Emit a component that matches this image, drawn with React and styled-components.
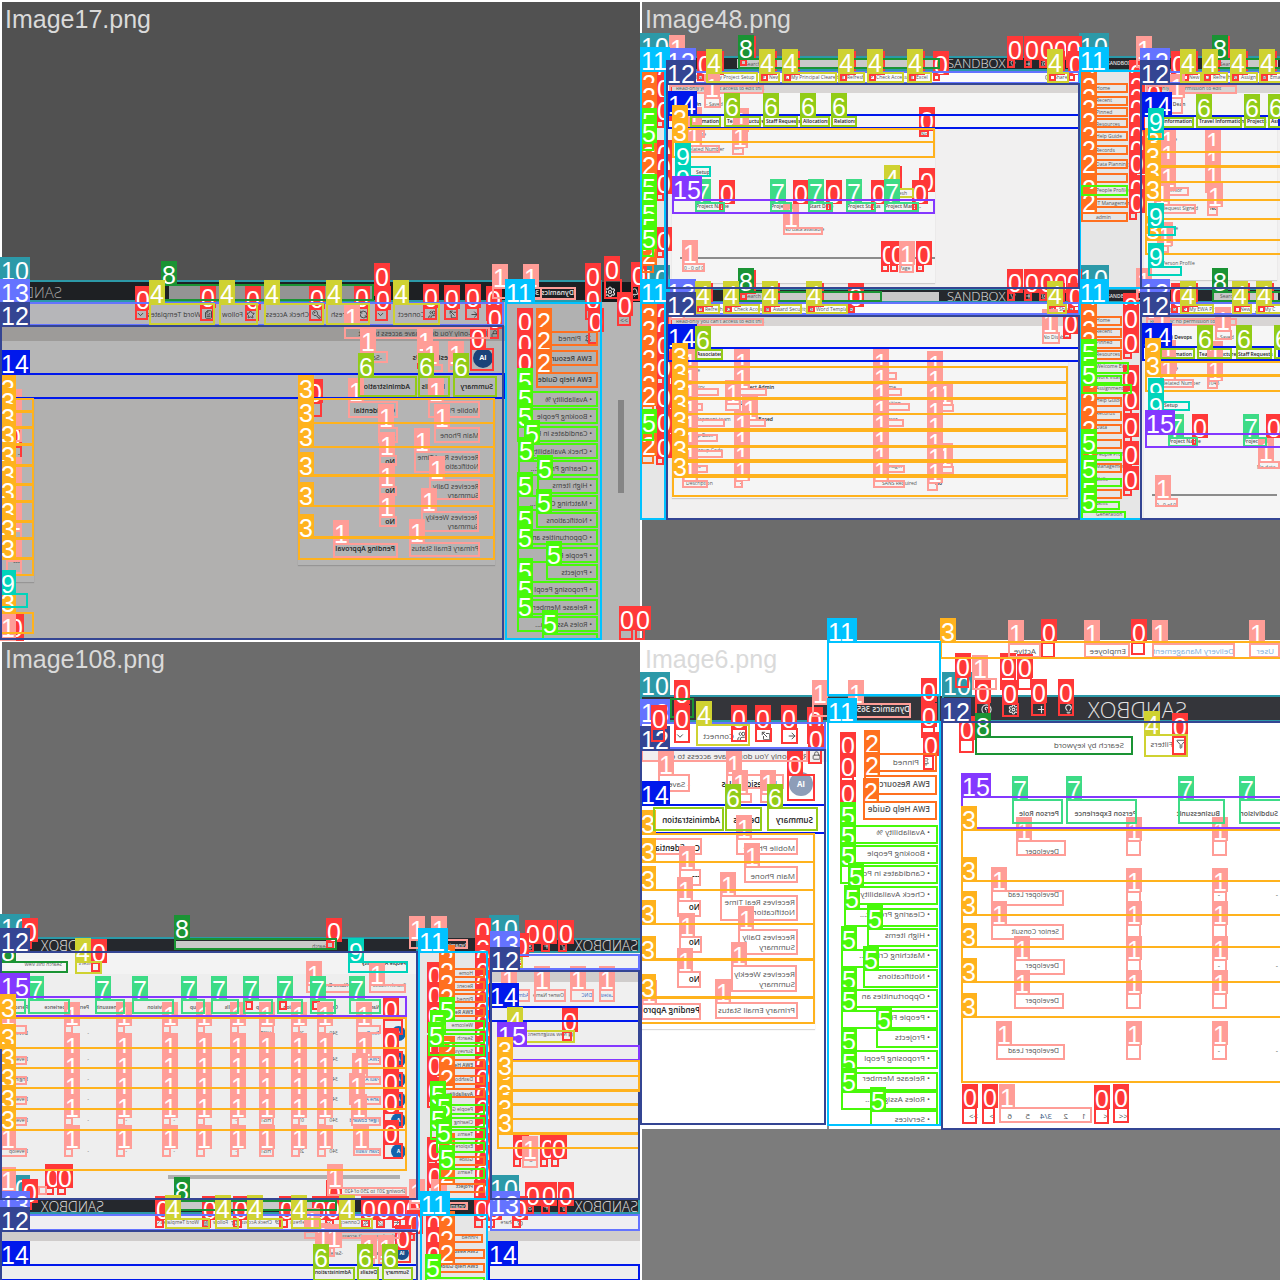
import React from "react";
import styled, { createGlobalStyle, css } from "styled-components";
import {
  ArrowLeft, ExternalLink, Users, ChevronDown, RefreshCw, KeyRound, Star, FileText,
  Plus, Settings, HelpCircle, Bell, Lock, Pin, Filter, Save, Lightbulb,
} from "lucide-react";

const Global = createGlobalStyle`
  *, *::before, *::after { box-sizing: border-box; }
  body { margin: 0; background: #fff; font-family: "Liberation Sans", Arial, sans-serif; }
  button, input { font: inherit; color: inherit; }
`;

/* ---------- class colours used by the boxes ---------- */
const COLORS = [
  "#ff3838", "#ff9d97", "#ff701f", "#ffb21d", "#cfd231", "#48f90a", "#92cc17", "#3ddb86",
  "#1a9334", "#00d4bb", "#2c99a8", "#00c2ff", "#344593", "#6473ff", "#0018ec", "#8438ff",
];

/* ---------- page structure ---------- */
const Page = styled.main`
  position: relative;
  display: grid;
  grid-template-columns: 1fr 1fr;
  grid-auto-rows: 640px;
  overflow: hidden;
`;
const TileBox = styled.figure`
  margin: 0;
  min-width: 0;
  display: flex;
  flex-direction: column;
  border-top: 2px solid #fff;
  border-left: 2px solid #fff;
  background: ${(p) => p.$bg};
  overflow: hidden;
`;
const Caption = styled.figcaption`
  height: ${(p) => p.$h}px;
  flex: none;
  padding: 3px;
  font-size: 25px;
  line-height: 28px;
  color: #dadada;
`;
const WindowRow = styled.div`
  display: flex;
  height: ${(p) => p.$h}px;
  flex: none;
`;
const WindowBox = styled.section`
  display: flex;
  flex-direction: column;
  min-width: 0;
  overflow: hidden;
  font-family: "Open Sans", "Noto Sans", sans-serif;
  flex: ${(p) => (p.$w ? `0 0 ${p.$w}px` : "1 1 0")};
  font-size: ${(p) => p.$fs}px;
  line-height: ${(p) => p.$fs + 2}px;
  color: ${(p) => p.$ink};
  background: ${(p) => p.$bg};
  transform: ${(p) => (p.$mirror ? "scaleX(-1)" : "none")};
`;
const TopBar = styled.header`
  display: flex;
  align-items: center;
  flex: none;
  height: ${(p) => p.$h}px;
  background: ${(p) => p.$bg};
  color: #e4e4e4;
  font-weight: 600;
  white-space: nowrap;
`;
const BarText = styled.span`
  flex: 0 0 ${(p) => p.$w}px;
`;
const Brand = styled.span`
  flex: 0 0 ${(p) => p.$w}px;
  font-size: ${(p) => p.$fs}px;
  line-height: ${(p) => p.$fs}px;
  font-weight: 300;
  color: ${(p) => (p.$dim ? "#a9a9a9" : "inherit")};
`;
const Space = styled.span`
  flex: 0 0 ${(p) => p.$w}px;
`;
const SearchField = styled.input`
  flex: 0 0 ${(p) => p.$w}px;
  min-width: 0;
  height: ${(p) => p.$h}px;
  border: 0;
  border-radius: 0;
  padding: 0 8px;
  background: ${(p) => p.$bg};
  color: #555;
  font-weight: 400;
`;
const Body = styled.div`
  display: flex;
  flex: 1;
  min-height: 0;
`;
const Nav = styled.nav`
  flex: ${(p) => (p.$w ? `0 0 ${p.$w}px` : "1 1 0")};
  background: ${(p) => p.$bg};
  padding-top: ${(p) => p.$top}px;
  overflow: hidden;
  border-right: ${(p) => (p.$scroll ? "2px solid #8c8c8c" : "0")};
`;
const NavLink = styled.a`
  display: flex;
  align-items: center;
  height: ${(p) => p.$h}px;
  padding-left: ${(p) => p.$pad}px;
  gap: 3px;
  white-space: nowrap;
  text-decoration: none;
  color: inherit;
  font-weight: ${(p) => (p.$bold ? 600 : 400)};
`;
const Main = styled.div`
  flex: 1;
  min-width: 0;
  display: flex;
  flex-direction: column;
  overflow: hidden;
`;
const Band = styled.div`
  display: flex;
  align-items: center;
  flex: none;
  height: ${(p) => p.$h}px;
  background: ${(p) => p.$bg || "transparent"};
  white-space: nowrap;
`;
const plainButton = css`
  display: flex;
  align-items: center;
  gap: 3px;
  min-width: 0;
  padding: 0;
  border: 0;
  background: none;
  white-space: nowrap;
`;
const Command = styled.button`
  ${plainButton}
  flex: 0 0 ${(p) => p.$w}px;
  margin-left: ${(p) => p.$gap}px;
`;
const Tab = styled.button`
  ${plainButton}
  flex: 0 0 ${(p) => p.$w}px;
  margin-left: ${(p) => p.$gap}px;
  color: #222;
  font-weight: 600;
`;
const Piece = styled.span`
  flex: 0 0 ${(p) => p.$w}px;
  margin-left: ${(p) => p.$gap}px;
  font-weight: ${(p) => (p.$bold ? 600 : 400)};
  color: ${(p) => p.$c || "inherit"};
`;
const Avatar = styled.span`
  display: grid;
  place-items: center;
  flex: none;
  width: ${(p) => p.$s}px;
  height: ${(p) => p.$s}px;
  margin-left: ${(p) => p.$gap || 0}px;
  border-radius: 50%;
  background: ${(p) => p.$bg};
  color: #fff;
  font-weight: 700;
`;
const Cards = styled.div`
  display: flex;
  align-items: flex-start;
  flex: 1;
  padding-left: ${(p) => p.$pad}px;
  gap: ${(p) => p.$gap || 0}px;
`;
const Card = styled.div`
  margin: 0;
  flex: 0 0 ${(p) => p.$w}px;
  padding-bottom: 6px;
  background: ${(p) => p.$bg};
  box-shadow: 0 1px 1px rgba(0, 0, 0, 0.15);
`;
const FieldRow = styled.div`
  display: grid;
  align-items: center;
  grid-template-columns: ${(p) => p.$cols};
  height: ${(p) => p.$h}px;
  padding-left: ${(p) => p.$pad}px;
  dt, dd { margin: 0; white-space: pre; }
  dd { font-weight: 600; color: #222; }
`;
const Grid = styled.table`
  border-collapse: collapse;
  table-layout: fixed;
  width: ${(p) => p.$w}px;
  margin-left: ${(p) => p.$ml || 0}px;
  flex: none;
  font-size: ${(p) => p.$fs || 5}px;
  th, td { padding: 0; text-align: left; vertical-align: middle; white-space: nowrap; }
  th { font-weight: 600; }
  a { color: #1a5fa8; text-decoration: none; }
`;
const Tr = styled.tr`
  height: ${(p) => p.$h}px;
`;
const Rule = styled.hr`
  border: 0;
  flex: none;
  width: ${(p) => p.$w}px;
  height: ${(p) => p.$h}px;
  margin: 0 0 0 ${(p) => p.$ml}px;
  background: ${(p) => p.$c};
`;
const ScrollRail = styled.div`
  width: ${(p) => p.$w}px;
  height: ${(p) => p.$h}px;
  margin: ${(p) => p.$mt}px 0 0 ${(p) => p.$ml}px;
  background: #858585;
`;

/* ---------- boxes drawn over the windows ---------- */
const Layer = styled.div`
  position: absolute;
  inset: 0;
  pointer-events: none;
`;
const MarkBox = styled.div.attrs((p) => ({
  style: { left: p.$r[0], top: p.$r[1], width: p.$r[2], height: p.$r[3] },
}))`
  position: absolute;
  border: 2px solid ${(p) => p.$c};
`;
const MarkTag = styled.span`
  position: absolute;
  left: -2px;
  bottom: calc(100% + 1px);
  width: ${(p) => (p.$wide ? 30 : 16)}px;
  height: 24px;
  padding-left: 1px;
  background: ${(p) => p.$c};
  color: #fff;
  font-size: 25px;
  line-height: 28px;
`;

/* ---------- small building functions ---------- */
const ICONS = {
  back: ArrowLeft, open: ExternalLink, users: Users, down: ChevronDown, refresh: RefreshCw,
  key: KeyRound, star: Star, doc: FileText, plus: Plus, gear: Settings, help: HelpCircle,
  bell: Bell, lock: Lock, pin: Pin, filter: Filter, save: Save, bulb: Lightbulb,
};
const IconBox = styled.span`
  display: flex;
  flex: none;
`;
const Icon = ({ n, s = 8 }) => {
  const C = ICONS[n];
  return C ? <IconBox><C size={s} strokeWidth={2.4} aria-hidden="true" /></IconBox> : null;
};

const Tile = ({ title, bg, pad, children }) => (
  <TileBox $bg={bg}>
    {title && <Caption $h={pad}>{title}</Caption>}
    {children}
  </TileBox>
);

const Win = ({ w, mirror, fs = 5, ink = "#555", bg = "#f1f0f0", barH, barBg = "#25282d", bar, nav, children }) => (
  <WindowBox $w={w} $mirror={mirror} $fs={fs} $ink={ink} $bg={bg}>
    <TopBar $h={barH} $bg={barBg}>{bar}</TopBar>
    <Body>
      {nav}
      {children && <Main>{children}</Main>}
    </Body>
  </WindowBox>
);

const Side = ({ w, bg, top, pad, items, scroll }) => (
  <Nav $w={w} $bg={bg} $top={top} $scroll={scroll}>
    {items.map(([t, h, bold, icon], i) => (
      <NavLink key={i} href="#item" $h={h} $pad={pad} $bold={bold}>
        {icon && <Icon n={icon} />}
        {t}
      </NavLink>
    ))}
  </Nav>
);

const Commands = ({ h, bg, items, s }) => (
  <Band $h={h} $bg={bg}>
    {items.map(([gap, w, icon, t], i) => (
      <Command key={i} type="button" $gap={gap} $w={w} aria-label={t || icon}>
        <Icon n={icon} s={s} />
        {t}
      </Command>
    ))}
  </Band>
);

const Tabs = ({ h, bg, items }) => (
  <Band $h={h} $bg={bg}>
    {items.map(([gap, w, t], i) => (
      <Tab key={i} type="button" $gap={gap} $w={w}>{t}</Tab>
    ))}
  </Band>
);

const Texts = ({ h, bg, items = [], children }) => (
  <Band $h={h} $bg={bg}>
    {children}
    {items.map(([gap, w, t, bold, c], i) => (
      <Piece key={i} $gap={gap} $w={w} $bold={bold} $c={c}>{t}</Piece>
    ))}
  </Band>
);

const Form = ({ w, bg, pad, cols, rows }) => (
  <Card as="dl" $w={w} $bg={bg}>
    {rows.map(([h, ...cells], i) => (
      <FieldRow key={i} $h={h} $pad={pad} $cols={cols}>
        {cells.map((t, j) => (j % 2 ? <dd key={j}>{t}</dd> : <dt key={j}>{t}</dt>))}
      </FieldRow>
    ))}
  </Card>
);

const DataTable = ({ w, ml, fs, cols, headH, head, rows }) => (
  <Grid $w={w} $ml={ml} $fs={fs}>
    <colgroup>{cols.map((c, i) => <col key={i} width={c} />)}</colgroup>
    <thead><Tr $h={headH}>{head.map((t, i) => <th key={i}>{t}</th>)}</Tr></thead>
    <tbody>
      {rows.map(([h, ...cells], i) => (
        <Tr key={i} $h={h}>{cells.map((t, j) => <td key={j}>{t}</td>)}</Tr>
      ))}
    </tbody>
  </Grid>
);

/* ---------- Image17 ---------- */
const GROUPS = [
  "Availability %", "Booking People", "Candidates in Po", "Check Availability", "Clearing Project...",
  "High Items", "Matching Criteri...", "Notifications", "Opportunities an", "People Files", "Projects",
  "Proposing Peopl", "Release Member", "Roles Assignm...", "Services",
];
const CONTACT = [
  ["Mobile Phone", "Confidential"], ["Main Phone", "---"], ["Receives Real Time\nNotifications", "No"],
  ["Receives Daily\nSummary", "No"], ["Receives Weekly\nSummary", "No"], ["Primary Email Status", "Pending Approval"],
];
const withHeights = (rows, hs) => rows.map((r, i) => [hs[i], ...r]);

const Image17 = () => (
  <Tile title="Image17.png" bg="#515151" pad={280}>
    <WindowRow $h={358}>
      <Win w={599} mirror fs={7} ink="#3c3c3c" bg="#b1b0af" barH={20} barBg="#1e2023"
        bar={<>
          <BarText $w={27} /><BarText $w={74}>Dynamics 365</BarText><Space $w={127} />
          <SearchField $w={204} $h={14} $bg="#949494" aria-label="Search" />
          <Space $w={107} /><Brand $w={60} $fs={15} $dim>SANDBOX</Brand>
        </>}
        nav={<Side w={96} bg="#b1b1b1" top={27} pad={9} scroll items={[
          ["Pinned", 19, 0, "pin"], ["EWA Resources", 21, 1], ["EWA Help Guide", 21, 1],
          ...GROUPS.map((t, i) => ["•   " + t, i % 3 ? 17 : 18, 0]),
        ]} />}>
        <Commands h={24} bg="#b6b6b9" s={9} items={[
          [26, 14, "back"], [7, 14, "open"], [7, 44, "users", "Connect"], [8, 10, "down"],
          [7, 44, "refresh", "Refresh"], [3, 58, "key", "Check Access"], [8, 38, "star", "Follow"],
          [4, 64, "doc", "Word Templates"], [4, 12, "down"],
        ]} />
        <Texts h={15} bg="#9d9b99" items={[[4, 150, "Read-only You don't have access to edit"]]}><Space $w={6} /><Icon n="lock" /></Texts>
        <Texts h={33} bg="#b6b6b6" items={[[12, 56, "IA Resident Us", 1, "#1c1c1c"], [23, 40, "-Saved"]]}>
          <Avatar $s={20} $gap={12} $bg="#1b4379">IA</Avatar>
        </Texts>
        <Tabs h={24} bg="#b6b6b6" items={[[12, 38, "Summary"], [10, 25, "Details"], [10, 55, "Administration"]]} />
        <Cards $pad={10} $gap={264}>
          <Form w={197} bg="#b4b4b4" pad={16} cols="84px 1fr" rows={withHeights(CONTACT, [25, 25, 27, 31, 31, 22])} />
          <Form w={32} bg="#b4b4b4" pad={14} cols="1fr" rows={[[37, "-"], [37, "-"], [37, "-"], [37, "-"], [30, "---"]]} />
        </Cards>
      </Win>
      <Win mirror fs={7} bg="#b5b5b5" barH={20} barBg="#17191c"
        bar={<><Space $w={1} /><Icon n="bell" s={9} /><Space $w={14} /><Icon n="gear" s={12} /></>}>
        <Texts h={36} bg="#b5b5b5" items={[[12, 20, ">>"]]} />
        <ScrollRail $w={6} $h={93} $mt={62} $ml={16} />
      </Win>
    </WindowRow>
  </Tile>
);

/* ---------- Image48 ---------- */
const darkBar48 = (
  <>
    <Space $w={95} /><SearchField $w={202} $h={9} $bg="#c9c9c9" defaultValue="Search" aria-label="Search" />
    <Space $w={8} /><Brand $w={62} $fs={13}>SANDBOX</Brand>
    <Icon n="bulb" /><Space $w={8} /><Icon n="plus" /><Space $w={8} /><Icon n="gear" />
  </>
);
const sideBar48 = <><Space $w={28} /><BarText $w={30}>SANDBOX</BarText><Space $w={75} /><SearchField $w={66} $h={9} $bg="#c9c9c9" defaultValue="Search" aria-label="Search" /></>;
const PROJECT_COLS = ["Project Name", "Project", "Start Date", "Project Status", "Project Mana..."];

const Image48 = () => (
  <Tile title="Image48.png" bg="#6c6c6c" pad={54}>
    <WindowRow $h={233}>
      <Win w={437} barH={15} bar={darkBar48} nav={<Side w={24} bg="#e6e6e6" top={20} pad={2} items={[]} />}>
        <Commands h={12} bg="#fbfbfb" s={6} items={[[30, 8, "save"], [2, 51, "open", "My Project Setup"], [3, 20, "plus", "New"], [2, 54, "users", "My Principal Cleared"], [2, 26, "doc", "Refresh"], [3, 36, "key", "Check Access"], [4, 24, "doc", "Excel"], [114, 22, "open", "Share"]]} />
        <Texts h={10} bg="#d8d5d4" items={[[10, 100, "Read-only you can't access to edit this"]]} />
        <Texts h={22} bg="#f6f6f6" items={[[28, 10, "On", 1, "#111"], [2, 20, "- Saved"]]} />
        <Tabs h={13} bg="#f6f6f6" items={[[24, 33, "Information"], [4, 35, "Team Structure"], [4, 33, "Staff Requests"], [4, 28, "Allocations"], [3, 26, "Relations"]]} />
        <Cards $pad={6}>
          <Card $w={263} $bg="#f5f5f5">
            <Texts h={13} items={[[20, 22, "Name"], [207, 10, "No"]]} />
            <Texts h={16} items={[[14, 40, "Related Number"], [8, 20, "---"]]} />
            <Texts h={30} items={[[24, 30, "Setup", 1]]} />
            <Texts h={13} items={[[213, 28, "+ Refresh"]]} />
            <DataTable w={239} ml={24} cols={[75, 38, 38, 38, 50]} headH={13} head={PROJECT_COLS} rows={[]} />
            <Texts h={32} items={[[112, 60, "No data available"]]} />
            <Texts h={12} />
            <Rule $w={255} $h={2} $ml={8} $c="#8c8c8c" />
            <Texts h={18} items={[[12, 25, "0 - 0 of 0"], [172, 8, "<"], [10, 18, "Page 1"], [1, 8, ">"]]} />
          </Card>
        </Cards>
      </Win>
      <Win barH={15} bar={sideBar48} nav={<Side w={61} bg="#e6e6e6" top={11} pad={17} items={[["Home", 12], ["Recent", 12], ["Pinned", 12], ["Resources", 12], ["Help Guide", 13], ["Records", 14], ["Data Planning", 14], ["", 13], ["People Profiles", 13], ["IT Management", 13], ["admin", 14]]} />}>
        <Commands h={12} bg="#fbfbfb" s={6} items={[[30, 8, "save"], [2, 22, "plus", "New"], [2, 26, "refresh", "Refresh"], [2, 28, "users", "Assign"], [1, 18, "doc", "Email"]]} />
        <Texts h={10} bg="#d8d5d4" items={[[6, 80, "Read-only: no permission to edit"]]} />
        <Texts h={22} bg="#f6f6f6" items={[[24, 28, "Jan Dean", 1]]} />
        <Tabs h={13} bg="#f6f6f6" items={[[23, 32, "Information"], [4, 44, "Travel Information"], [4, 22, "Projects"], [2, 10, "Ass"]]} />
        <Cards $pad={4}>
          <Form w={133} bg="#f5f5f5" pad={18} cols="48px 1fr" rows={[[23, "Phone", "-"], [15, "Email", "-"], [15, "Team", "-"], [18, "Is Senior", "-"], [19, "Request Signed", "No"], [20, "People", ""], [14, "Role", ""], [22, "Person Profile", ""]]} />
        </Cards>
      </Win>
    </WindowRow>
    <WindowRow $h={231}>
      <Win w={437} barH={14} bar={darkBar48} nav={<Side w={24} bg="#e6e6e6" top={20} pad={2} items={[]} />}>
        <Commands h={13} bg="#fbfbfb" s={6} items={[[30, 24, "refresh", "Refresh"], [5, 36, "key", "Check Access"], [3, 39, "users", "Award Security"], [4, 42, "doc", "Word Templates"], [1, 8, "down"], [192, 20, "open", "Share"]]} />
        <Texts h={10} bg="#d8d5d4" items={[[10, 100, "Read-only you can't access to edit this"]]} />
        <Texts h={22} bg="#f6f6f6" items={[[377, 30, "No Disabled"]]} />
        <Tabs h={13} bg="#f6f6f6" items={[[31, 28, "Associates"]]} />
        <Cards $pad={6}>
          <Form w={396} bg="#f5f5f5" pad={14} cols="54px 142px 53px 1fr" rows={[[19, "Name", "-", "Job", "-"], [15, "Country", "Project Admin", "Name", "-"], [16, "Text", "Link", "Position", "Tier 1"], [17, "Development team", "Project Based", "Career", "-"], [15, "Group Base", "-", "", "-"], [15, "Job Group Code", "-", "", "-"], [16, "Status", "-", "Manager", "Tier 1"], [18, "Description", "-", "SANS Required", "No"]]} />
        </Cards>
      </Win>
      <Win barH={14} bar={sideBar48} nav={<Side w={61} bg="#e6e6e6" top={11} pad={17} items={[["Home", 12], ["Recent", 11], ["Pinned", 11], ["Resources", 12], ["Welcome EWA", 12], ["Work Vitals", 11], ["Assignment Geo", 11], ["Help Guide", 13], ["Records", 13], ["Data", 14], ["", 14], ["People Profiles", 12], ["Management", 13], ["Skills", 13], ["", 12], ["Skills", 11], ["Generation", 10]]} />}>
        <Commands h={13} bg="#fbfbfb" s={6} items={[[30, 8, "save"], [2, 33, "open", "My EWA Pr"], [18, 18, "plus", "New"], [6, 20, "users", "My C"]]} />
        <Texts h={10} bg="#d8d5d4" items={[[10, 90, "Read-only: no permission to edit"]]} />
        <Texts h={22} bg="#f6f6f6" items={[[27, 36, "(x) Devops", 1, "#111"], [14, 20, "- Saved"]]} />
        <Tabs h={13} bg="#f6f6f6" items={[[23, 32, "Information"], [4, 35, "Team Structure"], [4, 34, "Staff Requests"]]} />
        <Cards $pad={4}>
          <Card $w={133} $bg="#f5f5f5">
            <Texts h={14} items={[[20, 22, "Name"]]} />
            <Texts h={16} items={[[18, 40, "Related Number"], [6, 20, "1045"]]} />
            <Texts h={28} items={[[20, 30, "Setup", 1]]} />
            <Texts h={16} />
            <DataTable w={112} ml={24} cols={[75, 37]} headH={13} head={["Project Name", "Project"]} rows={[]} />
            <Texts h={38} items={[[113, 20, "No data"]]} />
            <Texts h={8} />
            <Rule $w={125} $h={2} $ml={8} $c="#8c8c8c" />
            <Texts h={18} items={[[12, 25, "0 - 0 of 0"]]} />
          </Card>
        </Cards>
      </Win>
    </WindowRow>
  </Tile>
);

/* ---------- Image108 ---------- */
const PEOPLE_HEAD = ["", "Name", "Org", "Location", "Group", "Skills", "Group", "Subdivision", "Businessunit", "Person Experience", "Person"];
const person = (h, name, loc, n, role) => [
  h, <Avatar key="a" $s={15} $bg="#1064ae">A</Avatar>, <a key="l" href="#person">{name}</a>, "340", n, loc, "-", "-", "-", "-", "-", role,
];
const PEOPLE = [
  person(31, "Tim Byrne", "HIST", "20", "Develop"), person(20, "EWA Ada", "", "", "Develop"),
  person(20, "Paul A", "", "", "Engine"), person(21, "Jane A", "", "", "Develop"),
  person(21, "Tiger Edward", "HIST", "01", "Develop"), person(40, "Evan Vasili", "HIST", "20", "Develop"),
];
const bar108 = (
  <>
    <Space $w={20} /><BarText $w={60}>Dynamics 365</BarText><Space $w={72} />
    <SearchField $w={162} $h={9} $bg="#c9c9c9" defaultValue="Search" aria-label="Search" />
    <Space $w={70} /><Brand $w={62} $fs={14}>SANDBOX</Brand>
  </>
);
const barRight108 = (
  <>
    <Space $w={2} /><Brand $w={70} $fs={14}>SANDBOX</Brand>
    <Icon n="bulb" /><Space $w={9} /><Icon n="plus" /><Space $w={9} /><Icon n="gear" />
  </>
);

const Image108 = () => (
  <Tile title="Image108.png" bg="#6c6c6c" pad={296}>
    <WindowRow $h={261}>
      <Win w={486} mirror bg="#eeeeee" barH={15} bar={bar108}
        nav={<Side w={70} bg="#e6e6e6" top={14} pad={15} scroll items={[["Home", 13], ["Recent", 13], ["Pinned", 13], ["EWA Resource", 13, 1], ["Welcome", 13], ["Search", 13], ["Surveys", 13], ["EWA Help Guide", 14, 1], ["Dashboards", 15], ["Availability", 15, 1], ["People Group", 14], ["Clearing", 12], ["Teams", 12], ["Explore", 13], ["Guide", 13], ["Teams", 13], ["Project", 14, 1]]} />}>
        <Band $h={21} $bg="#f3f3f3"><Space $w={12} /><Piece $w={60} $gap={0} $bold $c="#222">People Availability</Piece><Space $w={242} /><Command type="button" $w={28} $gap={0}><Icon n="filter" />Filters</Command><Space $w={6} /><SearchField $w={66} $h={10} $bg="#f5f5f5" defaultValue="Search this view" aria-label="Search this view" /></Band>
        <Texts h={23} items={[[12, 38, "Search results"], [20, 44, "Name Browse", 1]]} />
        <DataTable w={404} ml={12} cols={[26, 42, 34, 33, 34, 32, 30, 48, 38, 61, 26]} headH={21} head={PEOPLE_HEAD} rows={PEOPLE} />
        <Texts h={4} />
        <Rule $w={232} $h={4} $ml={18} $c="#b0b0b0" />
        <Texts h={24} items={[[12, 90, "Showing 201 to 250 of 420"]]} />
      </Win>
      <Win mirror bg="#eeeeee" barH={15} bar={barRight108}>
        <Commands h={16} bg="#f3f3f3" s={6} items={[[117, 30, "open", "Share"]]} />
        <Texts h={13} bg="#d0cdcc" />
        <Texts h={26} bg="#f0f0f0" items={[[26, 16, "Latest", 0, "#3b66c0"], [6, 22, "DNC", 0, "#3b66c0"], [6, 30, "Owner Name"], [4, 28, "Admin", 0, "#3b66c0"]]} />
        <Texts h={14} />
        <Texts h={24} items={[[67, 65, "▦ New assignment"]]} />
        <Texts h={103} />
        <Texts h={20} items={[[80, 8, "<"], [4, 8, "<"], [2, 18, "Page 1"], [4, 8, ">"]]} />
      </Win>
    </WindowRow>
    <WindowRow $h={81}>
      <Win w={486} mirror bg="#eeeeee" barH={15} bar={bar108}
        nav={<Side w={70} bg="#e6e6e6" top={16} pad={10} items={[["Pinned", 14], ["EWA Resource", 15, 1], ["EWA Help Guide", 15, 1]]} />}>
        <Commands h={17} bg="#efeff2" s={7} items={[[18, 8, "back"], [8, 8, "open"], [6, 30, "users", "Connect"], [8, 8, "down"], [6, 34, "refresh", "Refresh"], [2, 42, "key", "Check Access"], [2, 28, "star", "Follow"], [1, 48, "doc", "Word Templates"], [0, 8, "down"]]} />
        <Texts h={10} bg="#cfcccb" items={[[14, 100, "Read-only you can't access to edit"]]} />
        <Texts h={24} items={[[4, 30, "IA Resident", 1], [18, 20, "-Saved"]]}><Avatar $s={14} $gap={9} $bg="#174e8c">IA</Avatar></Texts>
        <Tabs h={15} items={[[9, 26, "Summary"], [6, 20, "Details"], [6, 40, "Administration"]]} />
      </Win>
      <Win mirror bg="#eeeeee" barH={15} bar={barRight108}>
        <Commands h={17} bg="#efeff2" s={6} items={[[117, 30, "open", "Share"]]} />
        <Texts h={10} bg="#cfcccb" />
      </Win>
    </WindowRow>
  </Tile>
);

/* ---------- Image6 ---------- */
const TopStrip = styled.div`
  display: flex;
  height: 54px;
  flex: none;
  background: #fff;
  > figcaption { flex: 0 0 298px; }
`;
const StripTexts = styled.div`
  flex: 1;
  display: flex;
  min-width: 0;
  font-family: "Open Sans", sans-serif;
  font-size: 8px;
  line-height: 10px;
  color: #555;
  transform: scaleX(-1);
`;
const Footer = styled.div`
  flex: 1;
  background: #7c7c7c;
`;

const Image6 = () => (
  <Tile bg="#fff">
    <TopStrip>
      <Caption $h={54}>Image6.png</Caption>
      <StripTexts>
        <Texts h={18} items={[[6, 26, "User", 0, "#7fb0dc"], [14, 86, "Delivery Management", 0, "#7fb0dc"], [22, 40, "Employee"], [50, 24, "Active"]]} />
      </StripTexts>
    </TopStrip>
    <WindowRow $h={433}>
      <Win w={298} mirror fs={8} bg="#fff" barH={26} barBg="#34353a"
        bar={<><Space $w={30} /><BarText $w={90}>Dynamics 365</BarText></>}
        nav={<Side w={113} bg="#fff" top={30} pad={10} scroll items={[["Pinned", 20, 0, "pin"], ["EWA Resources", 24, 1], ["EWA Help Guide", 26, 1], ...GROUPS.map((t, i) => ["•    " + t, i % 2 ? 21 : 20, 0])]} />}>
        <Commands h={27} bg="#fff" s={10} items={[[30, 16, "back"], [10, 16, "open"], [8, 54, "users", "Connect"], [8, 12, "down"]]} />
        <Texts h={13} bg="#f1efef" items={[[4, 150, "Read-only You don't have access to edit"]]}><Space $w={6} /><Icon n="lock" s={9} /></Texts>
        <Texts h={43} items={[[12, 60, "IA Resident Us", 1, "#222"], [27, 36, "- Saved"]]}><Avatar $s={24} $gap={14} $bg="#8d9db8">IA</Avatar></Texts>
        <Tabs h={29} items={[[14, 44, "Summary"], [9, 31, "Details"], [9, 66, "Administration"]]} />
        <Cards $pad={12}>
          <Form w={173} bg="#fff" pad={20} cols="95px 1fr" rows={withHeights(CONTACT.map(([a, b]) => [a, b.replace("Approval", "Appro")]), [28, 28, 34, 36, 37, 26])} />
        </Cards>
      </Win>
      <Win mirror fs={8} bg="#fff" barH={26} barBg="#34353a"
        bar={<><Space $w={93} /><Brand $w={113} $fs={22}>SANDBOX</Brand><Icon n="bulb" s={11} /><Space $w={16} /><Icon n="plus" s={11} /><Space $w={17} /><Icon n="gear" s={11} /><Space $w={16} /><Icon n="help" s={11} /></>}>
        <Band $h={44}><Command type="button" $w={44} $gap={94}><Icon n="filter" s={10} />Filters</Command><Space $w={10} /><SearchField $w={157} $h={16} $bg="#fff" defaultValue="Search by keyword" aria-label="Search by keyword" /></Band>
        <Texts h={32} />
        <DataTable w={336} ml={2} fs={7} cols={[58, 83, 78, 117]} headH={32}
          head={["Subdivision", "Businessunit", "Person Experience", "Person Role"]}
          rows={[[44, "", "", "", "Developer"], [42, "-", "-", "", "Developer Lead"], [32, "", "", "", "Senior Consult"], [35, "-", "-", "", "Developer"], [35, "", "", "", "Developer"], [65, "-", "-", "", "Developer Lead"]]} />
        <Texts h={66} items={[[152, 14, "<<"], [6, 10, "<"], [12, 8, "1"], [10, 8, "2"], [8, 14, "3/4", 0, "#36567e"], [8, 8, "5"], [10, 8, "6"], [10, 8, ">"], [8, 14, ">>"]]} />
      </Win>
    </WindowRow>
    <Footer />
  </Tile>
);

/* ---------- box data: class -> [left, top, width, height, untagged] ---------- */
const row = (y, w, h, xs) => xs.map((x) => [x, y, w, h]);
const col = (x, w, h, ys) => ys.map((y) => [x, y, w, h]);

const MARKS = {
  0: [
    [135, 309, 13, 11], [200, 307, 14, 14], [245, 309, 14, 12], [309, 308, 14, 13], [354, 307, 15, 14], [375, 309, 13, 12],
    [423, 307, 14, 13], [444, 308, 14, 12], [465, 307, 14, 13], [374, 286, 10, 10], [486, 309, 12, 12], [487, 328, 12, 11],
    [585, 286, 12, 11], [585, 309, 12, 11], [588, 331, 10, 13], [604, 279, 18, 20], [631, 285, 9, 16], [617, 315, 14, 11],
    ...col(517, 12, 12, [331, 353, 372]), [470, 348, 24, 23], [307, 402, 15, 15], [417, 349, 16, 20],
    [6, 428, 16, 16], [6, 446, 16, 14], [8, 637, 16, 3], [619, 629, 14, 11], [635, 629, 10, 11],
    ...row(59, 8, 9, [1007, 1024, 1039, 1053, 1066]), ...row(292, 8, 9, [1007, 1024, 1039, 1053, 1066]),
    ...row(74, 7, 7, [697, 708, 761, 784, 840, 869, 909, 933, 1049, 1068, 1171, 1182, 1204, 1232, 1261]),
    ...row(306, 7, 7, [697, 725, 764, 808, 848, 1049, 1068, 1171, 1182, 1234, 1258]),
    [740, 59, 7, 7], [740, 293, 7, 7], [1214, 59, 7, 7], [919, 130, 10, 7], [886, 189, 8, 8], [919, 191, 8, 8],
    ...row(203, 5, 8, [719, 793, 826, 871, 912]), ...row(264, 8, 8, [881, 890, 916]),
    ...col(656, 8, 8, [87, 98, 120, 163, 177, 193, 250, 326, 340, 355, 377, 407, 432, 457]),
    ...col(1129, 8, 8, [83, 96, 107, 118, 131, 145, 159, 173, 198, 212]),
    ...col(1123, 9, 7, [316, 328, 352, 388, 409, 436, 464, 489]),
    [1146, 86, 9, 10], [1146, 103, 16, 12], [1063, 333, 8, 6], [668, 364, 5, 94, 1], [1192, 437, 5, 8], [1266, 437, 5, 8],
    [22, 941, 10, 8], [326, 941, 8, 8], [91, 962, 9, 10], [245, 1001, 8, 9, 1], [279, 1001, 8, 9, 1], [312, 1001, 8, 9, 1],
    ...col(383, 20, 16, [1019, 1051, 1072, 1092, 1112, 1143]), [45, 1187, 9, 8], [57, 1187, 9, 8],
    ...col(427, 10, 8, [985, 1005, 1025, 1058, 1075, 1100, 1160, 1186]),
    ...col(475, 10, 9, [941, 958, 968, 981, 993, 1007, 1020, 1033, 1045, 1059, 1075, 1088, 1105, 1118, 1129, 1142, 1156, 1168, 1183]),
    ...row(943, 9, 9, [525, 541, 558]), ...row(1205, 9, 9, [525, 541, 558]), [513, 956, 10, 9], [562, 1031, 10, 10],
    ...row(1158, 8, 9, [513, 540, 551]), [22, 1202, 10, 8], [326, 1203, 8, 8],
    ...row(1219, 9, 9, [155, 202, 233, 279, 312, 325, 361, 376, 392, 405, 474, 486, 512]), [474, 1203, 9, 9],
    [407, 1233, 8, 8], [395, 1248, 16, 15], ...col(426, 10, 8, [1234, 1250, 1265]),
    [674, 703, 15, 14], [674, 728, 16, 15], [731, 728, 16, 14], [755, 728, 17, 14], [781, 728, 17, 16], [807, 730, 14, 14], [808, 749, 14, 15],
    [787, 774, 28, 27], [726, 774, 14, 12], [921, 701, 14, 12], [921, 726, 14, 12], [923, 755, 11, 15], ...col(840, 14, 12, [755, 776, 803]),
    [1041, 642, 14, 16], [1131, 642, 14, 13], [955, 676, 14, 12], [1000, 676, 16, 14], [1017, 677, 15, 13],
    [975, 702, 15, 14], [1002, 703, 17, 14], [1031, 702, 15, 14], [1058, 702, 16, 14], [959, 739, 15, 14], [1172, 736, 14, 19],
    [962, 1107, 15, 17], [982, 1107, 13, 17], [1094, 1108, 15, 16], [1113, 1107, 16, 16],
  ],
  1: [
    [492, 287, 50, 12], [523, 287, 53, 13], [344, 327, 146, 12], [360, 351, 28, 12], [417, 351, 20, 12], [423, 364, 20, 8], [448, 364, 16, 8],
    [348, 401, 50, 17], [428, 401, 52, 17], [378, 427, 20, 16], [434, 427, 46, 16], [414, 451, 66, 22], [379, 455, 18, 11],
    [429, 479, 51, 21], [379, 486, 18, 10], [421, 511, 58, 21], [379, 516, 18, 11], [409, 542, 71, 15], [333, 543, 65, 15],
    ...col(6, 16, 14, [412, 428, 480, 494, 512, 530, 560]), [0, 637, 16, 3],
    [669, 58, 9, 9], [1136, 59, 9, 9], [1136, 291, 9, 9], [669, 85, 95, 9], [704, 97, 17, 11], [686, 130, 19, 8], [686, 145, 34, 8], [733, 131, 14, 8], [732, 147, 12, 8],
    [783, 227, 40, 8], [682, 263, 23, 9], [899, 264, 15, 9], [1146, 85, 91, 9], [1169, 97, 14, 17],
    ...col(1160, 16, 9, [150, 164, 182]), [1160, 187, 29, 9], [1154, 204, 42, 10], [1157, 245, 12, 8],
    ...col(1205, 14, 9, [151, 169, 184]), [1207, 206, 11, 10],
    [669, 318, 95, 8], [1042, 332, 18, 12],
    [682, 372, 15, 8], [682, 388, 37, 8], [682, 403, 21, 8], [682, 419, 43, 8], [682, 434, 36, 8], [682, 450, 41, 8], [682, 465, 26, 8], [682, 480, 26, 8],
    [734, 372, 15, 8], [725, 403, 16, 8], [734, 388, 33, 8], [742, 419, 24, 8], ...col(734, 15, 8, [434, 450, 465]), [734, 480, 9, 8],
    [873, 372, 24, 8], [873, 388, 29, 8], [873, 403, 37, 8], [873, 419, 31, 8], ...col(873, 15, 8, [434, 450]), [873, 465, 32, 8], [873, 480, 32, 8],
    ...col(927, 15, 8, [374, 389, 405, 421, 436, 452, 467]), [937, 404, 17, 8], [937, 466, 17, 8], [927, 482, 11, 9],
    [1146, 318, 91, 8], [1154, 330, 10, 9], [1215, 330, 17, 10], [1160, 363, 17, 8], [1160, 379, 34, 9], [1207, 364, 14, 8], [1207, 380, 11, 9], [1258, 461, 22, 8], [1155, 498, 23, 9],
    [409, 939, 30, 10], [431, 939, 37, 10], [306, 984, 45, 9], [369, 984, 37, 9],
    ...[64, 116, 162, 196, 230, 259, 291, 317].flatMap((x) => col(x, x === 259 ? 15 : 9, 9, [1025, 1056, 1076, 1096, 1117, 1148])),
    [356, 1025, 25, 9], [356, 1056, 25, 9], [352, 1076, 29, 9], [349, 1096, 32, 9], [351, 1117, 30, 9], [353, 1148, 28, 8],
    ...col(0, 27, 9, [1025, 1056, 1076, 1096, 1117, 1148]), [38, 1186, 9, 9, 1], [0, 1190, 16, 8], [327, 1187, 80, 9],
    [501, 989, 29, 13], [534, 989, 32, 13], [570, 989, 24, 13], [599, 989, 16, 13], [522, 1159, 16, 9], [409, 1202, 30, 8], [431, 1202, 37, 8],
    [304, 1231, 96, 8], [326, 1247, 9, 10], [361, 1258, 14, 6], [378, 1258, 14, 6], [315, 1246, 16, 10],
    [812, 703, 20, 14], [848, 703, 63, 15], [641, 749, 167, 13, 1], [658, 774, 32, 18], [726, 774, 58, 15], [732, 793, 20, 10], [760, 793, 18, 10],
    [736, 838, 62, 17], [650, 838, 52, 17, 1], [744, 866, 54, 17], [679, 869, 22, 17], [720, 895, 78, 26], [677, 900, 24, 17], [738, 929, 60, 26],
    [679, 936, 23, 17], [731, 965, 66, 27], [677, 971, 24, 17], [715, 1002, 83, 17], [641, 1003, 60, 17],
    [1008, 643, 33, 15], [1084, 643, 46, 15], [1152, 643, 83, 15], [1249, 643, 31, 15], [972, 678, 25, 12],
    [1016, 840, 50, 16], [991, 890, 73, 16], [991, 924, 73, 16], [1014, 959, 51, 16], [1014, 993, 50, 16], [996, 1044, 69, 16],
    ...[1126, 1212].flatMap((x) => col(x, 15, 16, [840, 891, 924, 959, 993, 1044])), [999, 1107, 93, 16],
  ],
  2: [
    [536, 331, 62, 15], [536, 350, 62, 16], [536, 372, 62, 16], ...col(641, 13, 9, [93, 106, 118, 165, 175, 264, 326, 339, 353, 368, 381, 394, 405, 455]),
    ...col(1081, 47, 10, [83, 96, 107, 118, 131, 145, 159, 173, 198, 212]), ...col(1081, 41, 10, [316, 328, 339, 350, 397, 411, 424, 439, 463, 489]),
    ...col(439, 46, 10, [968, 981, 993, 1007, 1059, 1075, 1088, 1156, 1183]), ...col(439, 44, 9, [1234]), [439, 1249, 46, 10], [439, 1263, 46, 10],
    [864, 753, 73, 19], [864, 775, 73, 20], [863, 801, 74, 19],
  ],
  14: [[0, 373, 505, 26], [667, 114, 413, 15], [1142, 115, 138, 15], [667, 347, 413, 15], [1142, 346, 138, 15], [489, 1006, 151, 16], [0, 1264, 418, 17], [488, 1264, 152, 17], [640, 804, 186, 30]],
  3: [
    [298, 398, 197, 26], [298, 422, 197, 26], [298, 446, 197, 30], [298, 475, 197, 32], [298, 505, 197, 33], [298, 537, 197, 23],
    [0, 398, 34, 14], [0, 411, 34, 17], [0, 427, 34, 18], [0, 444, 34, 22], [0, 465, 34, 20], [0, 484, 34, 18], [0, 501, 34, 21], [0, 521, 34, 18], [0, 538, 34, 21], [0, 558, 34, 18], [0, 612, 34, 22],
    [672, 128, 263, 15], [672, 141, 263, 17], [1145, 151, 150, 16], [1145, 166, 150, 17], [1145, 181, 150, 20], [1145, 199, 150, 21], [1145, 239, 150, 16],
    ...[366, 382, 398, 413, 430, 446, 459].map((y) => [672, y, 396, 17]), [672, 476, 396, 21], [1145, 361, 150, 15], [1145, 375, 150, 17],
    [0, 1017, 407, 32], [0, 1047, 407, 22], [0, 1067, 407, 22], [0, 1087, 407, 23], [0, 1108, 407, 23], [0, 1129, 407, 42],
    ...[1060, 1075, 1089, 1103, 1118].map((y) => [497, y, 143, 17]), [497, 1132, 143, 17],
    [640, 833, 175, 30], [640, 861, 175, 30], [640, 889, 175, 36], [640, 923, 175, 37], [640, 959, 175, 39], [640, 997, 175, 27],
    [940, 641, 345, 18], [961, 829, 330, 53], [961, 880, 330, 36], [961, 914, 330, 34], [961, 946, 330, 37], [961, 981, 330, 37], [961, 1016, 330, 67],
  ],
  4: [
    [149, 303, 66, 22], [219, 303, 39, 22], [264, 303, 60, 22], [326, 303, 44, 22], [393, 303, 47, 22],
    [706, 72, 52, 11], [759, 72, 21, 11], [782, 72, 55, 11], [838, 72, 27, 11], [867, 72, 37, 11], [907, 72, 25, 11], [1047, 72, 22, 11],
    [1180, 72, 22, 11], [1202, 72, 26, 11], [1230, 72, 28, 11], [1259, 72, 24, 11], [884, 188, 30, 10],
    [695, 304, 25, 10], [723, 304, 37, 10], [762, 304, 40, 10], [806, 304, 42, 10], [1047, 304, 20, 10], [1180, 304, 34, 10], [1232, 304, 20, 10], [1256, 304, 26, 10],
    [75, 961, 27, 13], [491, 957, 32, 11, 1], [507, 1030, 68, 13], [165, 1218, 45, 11], [215, 1218, 24, 11], [247, 1218, 36, 11], [291, 1218, 30, 11], [339, 1218, 34, 11],
    [696, 724, 54, 22], [1144, 734, 44, 23],
  ],
  5: [
    ...[517, 517, 517, 524, 518, 537, 517, 536, 517, 517, 546, 517, 517, 517].map((x, i) => [x, 391 + Math.round(i * 17.3), 598 - x, 16]), [542, 633, 56, 7],
    ...col(641, 13, 9, [131, 142, 197, 210, 223, 237, 248, 432]), [1081, 185, 47, 11, 1],
    [1081, 362, 48, 12], [1081, 375, 41, 9], [1081, 384, 51, 10], [1081, 452, 41, 9], [1081, 478, 41, 9], [1081, 501, 39, 9], [1081, 511, 45, 9],
    [439, 1020, 46, 11], [430, 1033, 55, 11], [428, 1045, 57, 11], [430, 1104, 55, 11], [436, 1117, 49, 11], [430, 1129, 55, 11], [436, 1142, 49, 11], [439, 1168, 46, 11], [425, 1277, 60, 6],
    ...[[840, 825], [840, 845], [840, 865], [848, 886], [844, 908], [867, 928], [841, 949], [863, 969], [841, 989], [841, 1010], [876, 1029], [841, 1050], [841, 1072], [841, 1091], [870, 1110]].map(([x, y]) => [x, y, 938 - x, y > 1100 ? 16 : 19]),
  ],
  6: [
    [358, 376, 59, 21], [418, 376, 32, 21], [453, 376, 44, 21], [690, 116, 31, 11, 1], [724, 116, 37, 11], [763, 116, 35, 11], [800, 116, 30, 11], [831, 116, 26, 11],
    [1160, 117, 34, 11, 1], [1196, 117, 46, 11], [1244, 117, 22, 11], [1268, 117, 14, 11], [695, 349, 28, 11], [1160, 348, 35, 11, 1], [1197, 348, 35, 11], [1236, 348, 36, 11], [1274, 348, 14, 11],
    [313, 1267, 42, 14], [357, 1267, 22, 14], [382, 1267, 31, 14], [653, 807, 71, 24, 1], [725, 807, 37, 24], [767, 807, 51, 24],
  ],
  7: [
    [695, 202, 30, 10], [770, 202, 22, 10], [808, 202, 25, 10], [846, 202, 30, 10], [884, 202, 35, 10], [1168, 437, 30, 10], [1243, 437, 24, 10],
    [0, 999, 26, 15], [28, 999, 42, 15], [95, 999, 30, 15], [132, 999, 42, 15], [181, 999, 24, 15], [211, 999, 28, 15], [243, 999, 30, 15], [277, 999, 26, 15], [310, 999, 26, 15], [349, 999, 32, 15],
    [1012, 799, 51, 25], [1066, 799, 71, 25], [1178, 799, 47, 25], [1239, 799, 50, 25],
  ],
  8: [[161, 284, 213, 17], [738, 58, 202, 11], [1212, 58, 80, 11], [738, 291, 144, 11], [1212, 291, 80, 11], [174, 938, 163, 12], [0, 961, 68, 12], [174, 1200, 163, 11], [670, 698, 24, 20, 1], [975, 736, 158, 19]],
  9: [[0, 593, 28, 15], [675, 166, 36, 11], [675, 188, 18, 9], [1148, 131, 16, 9], [1148, 226, 28, 10], [1148, 266, 34, 10], [1148, 401, 42, 10], [1148, 416, 14, 10], [348, 961, 60, 12]],
  10: [[0, 280, 602, 22], [640, 56, 440, 15], [1079, 56, 205, 15], [640, 288, 440, 15], [1079, 288, 205, 15], [0, 937, 418, 16], [489, 938, 151, 15], [0, 1198, 418, 16], [489, 1198, 151, 16], [640, 695, 300, 27], [942, 695, 345, 27]],
  13: [[0, 302, 504, 24], [666, 71, 414, 13], [1140, 71, 145, 13], [666, 302, 414, 13], [1140, 302, 145, 13], [490, 954, 150, 16], [0, 1214, 418, 17], [490, 1214, 150, 17], [640, 722, 186, 27]],
  11: [[505, 302, 97, 338], [640, 70, 26, 220], [1079, 70, 63, 219], [640, 302, 26, 218], [1079, 302, 63, 218], [418, 951, 70, 249], [420, 1214, 68, 70], [827, 641, 114, 55], [827, 721, 114, 405]],
  12: [[0, 325, 504, 315], [666, 83, 414, 206], [1140, 83, 145, 206], [666, 315, 414, 205], [1140, 315, 145, 205], [0, 951, 418, 249], [490, 970, 150, 230], [0, 1230, 418, 60], [640, 749, 186, 376], [941, 721, 345, 409]],
  15: [[672, 199, 263, 15], [1145, 433, 150, 15], [0, 996, 407, 21], [497, 1045, 143, 16], [961, 796, 330, 33]],
};
const ORDER = [10, 0, 1, 2, 14, 13, 8, 3, 4, 5, 6, 7, 9, 11, 12, 15];
const TOP_MARKS = [
  [0, 651, 728, 14, 14], [0, 674, 728, 16, 15],
  [3, 497, 1060, 143, 17], [3, 497, 1075, 143, 17], [3, 0, 1017, 407, 32], [3, 961, 829, 330, 53],
];

const Mark = ({ c, r, bare }) => (
  <MarkBox $r={r} $c={COLORS[c]}>
    {!bare && <MarkTag $c={COLORS[c]} $wide={c > 9}>{c}</MarkTag>}
  </MarkBox>
);

export default function App() {
  return (
    <>
      <Global />
      <Page>
        <Image17 />
        <Image48 />
        <Image108 />
        <Image6 />
        <Layer>
          {ORDER.flatMap((c) =>
            [...MARKS[c]].sort((a, b) => a[1] - b[1]).map((m, i) => (
              <Mark key={`${c}-${i}`} c={c} r={m.slice(0, 4)} bare={m[4]} />
            ))
          )}
          {TOP_MARKS.map(([c, ...r], i) => <Mark key={`top-${i}`} c={c} r={r} />)}
        </Layer>
      </Page>
    </>
  );
}
